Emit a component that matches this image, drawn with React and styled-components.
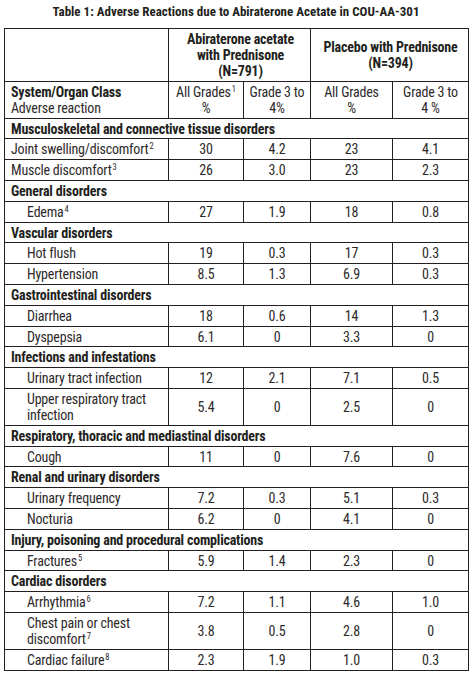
import React from "react";
import styled, { createGlobalStyle } from "styled-components";

const GlobalStyle = createGlobalStyle`
  html, body { margin: 0; padding: 0; background: #ffffff; }
  body {
    font-family: Roboto, "Liberation Sans", sans-serif;
    font-stretch: 75%;
    color: #231f20;
  }
`;

const Page = styled.div`
  width: 476px;
  padding: 4px 0 0 4px;
  box-sizing: border-box;
`;

const Title = styled.h1`
  margin: 0 0 8px 0;
  width: 464px;
  font-size: 13px;
  line-height: 16px;
  font-weight: 700;
  font-stretch: 75%;
  text-align: center;
  color: #231f20;
`;

const Table = styled.table`
  width: 464px;
  table-layout: fixed;
  border-collapse: collapse;
  font-size: 14px;
  font-stretch: 75%;
  letter-spacing: -0.2px;
  line-height: 16px;
  color: #2a2627;
`;

const Cell = styled.td`
  border: 1px solid #231f20;
  padding: 2px 4px 1.8px ${(p) => (p.$indent ? "22px" : "6px")};
  text-align: ${(p) => (p.$center ? "center" : "left")};
  vertical-align: middle;
  font-weight: ${(p) => (p.$bold ? 700 : 400)};
  white-space: pre-line;
  color: ${(p) => (p.$bold ? "#231f20" : "#2e2a2b")};
`;

const NumCell = styled(Cell)`
  padding-left: 2px;
  padding-right: 2px;
  text-align: center;
`;

const Bold = styled.span`
  font-weight: 700;
  color: #231f20;
`;

const Sup = styled.sup`
  font-size: 8.5px;
  line-height: 0;
  vertical-align: 5px;
  margin-left: 1px;
  letter-spacing: 0;
`;

const sections = [
  {
    title: "Musculoskeletal and connective tissue disorders",
    rows: [
      { name: "Joint swelling/discomfort", sup: "2", flat: true, v: ["30", "4.2", "23", "4.1"] },
      { name: "Muscle discomfort", sup: "3", flat: true, v: ["26", "3.0", "23", "2.3"] },
    ],
  },
  {
    title: "General disorders",
    rows: [{ name: "Edema", sup: "4", v: ["27", "1.9", "18", "0.8"] }],
  },
  {
    title: "Vascular disorders",
    rows: [
      { name: "Hot flush", v: ["19", "0.3", "17", "0.3"] },
      { name: "Hypertension", v: ["8.5", "1.3", "6.9", "0.3"] },
    ],
  },
  {
    title: "Gastrointestinal disorders",
    rows: [
      { name: "Diarrhea", v: ["18", "0.6", "14", "1.3"] },
      { name: "Dyspepsia", v: ["6.1", "0", "3.3", "0"] },
    ],
  },
  {
    title: "Infections and infestations",
    rows: [
      { name: "Urinary tract infection", v: ["12", "2.1", "7.1", "0.5"] },
      { name: "Upper respiratory tract\ninfection", v: ["5.4", "0", "2.5", "0"] },
    ],
  },
  {
    title: "Respiratory, thoracic and mediastinal disorders",
    rows: [{ name: "Cough", v: ["11", "0", "7.6", "0"] }],
  },
  {
    title: "Renal and urinary disorders",
    rows: [
      { name: "Urinary frequency", v: ["7.2", "0.3", "5.1", "0.3"] },
      { name: "Nocturia", v: ["6.2", "0", "4.1", "0"] },
    ],
  },
  {
    title: "Injury, poisoning and procedural complications",
    rows: [{ name: "Fractures", sup: "5", v: ["5.9", "1.4", "2.3", "0"] }],
  },
  {
    title: "Cardiac disorders",
    rows: [
      { name: "Arrhythmia", sup: "6", v: ["7.2", "1.1", "4.6", "1.0"] },
      { name: "Chest pain or chest\ndiscomfort", sup: "7", v: ["3.8", "0.5", "2.8", "0"] },
      { name: "Cardiac failure", sup: "8", v: ["2.3", "1.9", "1.0", "0.3"] },
    ],
  },
];

export default function App() {
  return (
    <Page>
      <GlobalStyle />
      <Title>Table 1: Adverse Reactions due to Abiraterone Acetate in COU-AA-301</Title>
      <Table>
        <colgroup>
          <col style={{ width: 164 }} />
          <col style={{ width: 75 }} />
          <col style={{ width: 67 }} />
          <col style={{ width: 82 }} />
          <col style={{ width: 76 }} />
        </colgroup>
        <tbody>
          <tr>
            <Cell />
            <Cell colSpan={2} $center $bold>
              {"Abiraterone acetate\nwith Prednisone\n(N=791)"}
            </Cell>
            <Cell colSpan={2} $center $bold>
              {"Placebo with Prednisone\n(N=394)"}
            </Cell>
          </tr>
          <tr>
            <Cell>
              <Bold>System/Organ Class</Bold>
              {"\nAdverse reaction"}
            </Cell>
            <NumCell>
              All Grades<Sup>1</Sup>
              {"\n%"}
            </NumCell>
            <NumCell>{"Grade 3 to\n4%"}</NumCell>
            <NumCell>{"All Grades\n%"}</NumCell>
            <NumCell>{"Grade 3 to\n4 %"}</NumCell>
          </tr>
          {sections.map((s) => (
            <React.Fragment key={s.title}>
              <tr>
                <Cell colSpan={5} $bold>
                  {s.title}
                </Cell>
              </tr>
              {s.rows.map((r) => (
                <tr key={r.name}>
                  <Cell $indent={!r.flat}>
                    {r.name}
                    {r.sup && <Sup>{r.sup}</Sup>}
                  </Cell>
                  {r.v.map((x, i) => (
                    <NumCell key={i}>{x}</NumCell>
                  ))}
                </tr>
              ))}
            </React.Fragment>
          ))}
        </tbody>
      </Table>
    </Page>
  );
}
